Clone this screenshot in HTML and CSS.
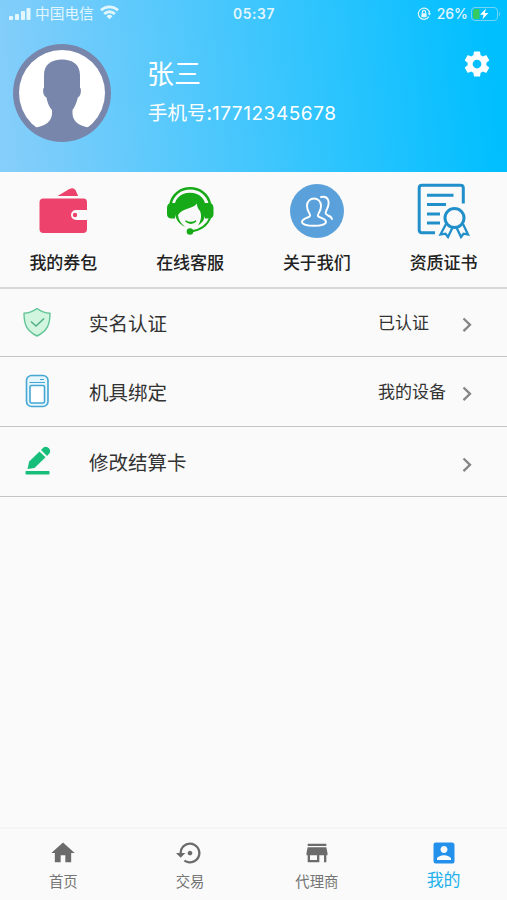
FILE: index.html
```html
<!DOCTYPE html>
<html lang="zh-CN">
<head>
<meta charset="utf-8">
<meta name="viewport" content="width=device-width, initial-scale=1">
<title>我的</title>
<link rel="stylesheet" href="styles.css">
</head>
<body>
<div class="screen">
  <header class="header">
    <div class="status">
      <div class="status-left">
        <svg class="signal" width="23" height="14" viewBox="0 0 23 14" fill="currentColor"><rect x="0" y="9" width="4" height="4" rx="1"/><rect x="6" y="7" width="4" height="6" rx="1"/><rect x="12" y="4" width="4" height="9" rx="1"/><rect x="17.500" y="1" width="4" height="12" rx="1"/></svg>
        <span class="carrier">中国电信</span>
        <svg class="wifi" width="19" height="15" viewBox="0 0 19 15" fill="none" stroke="currentColor" stroke-width="2.800"><path d="M1 5.300a12.200 12.200 0 0 1 17 0"/><path d="M4.200 8.900a7.600 7.600 0 0 1 10.600 0"/><path d="M9.500 14.300 6.500 11.300a4.300 4.300 0 0 1 6 0z" fill="currentColor" stroke="none"/></svg>
      </div>
      <span class="time">05:37</span>
      <div class="status-right">
        <svg width="14" height="14" viewBox="0 0 14 14" fill="none" stroke="currentColor" stroke-width="1.200"><path d="M11.800 9.600A5.600 5.600 0 1 1 12.600 6.500"/><path d="M10.700 6.200h3.300l-1.600 2.300z" fill="currentColor" stroke="none"/><rect x="4.400" y="6.200" width="5.200" height="4" rx=".5" fill="currentColor" stroke="none"/><path d="M5.400 6.200V5a1.600 1.600 0 0 1 3.200 0v1.200"/></svg>
        <span class="percent">26%</span>
        <svg width="30" height="14" viewBox="0 0 30 14"><rect x=".5" y=".5" width="26" height="13" rx="3.500" fill="none" stroke="#73d4f7"/><path d="M4 2h4.500v10H4a2 2 0 0 1-2-2V4a2 2 0 0 1 2-2z" fill="#35ca62"/><path d="M28 4.500q2 2.500 0 5z" fill="#73d4f7"/><path d="M15 1.500 9 7.800h3.600l-1.200 4.700 6-6.500h-3.600z" fill="#fff"/></svg>
      </div>
    </div>
    <div class="profile">
      <svg class="avatar" width="98" height="98" viewBox="0 0 98 98"><circle cx="49" cy="49" r="49" fill="#7986ac"/><circle cx="49" cy="49" r="43" fill="#fff"/><path d="M23 83.500c9-1.500 16-6 16-14V66c-3-3-5-9-5.500-12.500-2-.8-3.800-4-3.300-8.500l.8-1.500V31C31 20 39 15.500 49 15.500S67 20 67 31v12.500l.8 1.500c.5 4.500-1 7.700-3 8.500C64 57 62 63 59.500 66v3.500c0 8 7 12.500 16 14C68 92 60 94 49 94S30 92 23 83.500z" fill="#7986ac"/></svg>
      <div class="identity">
        <div class="name">张三</div>
        <div class="phone">手机号:<span class="digits">17712345678</span></div>
      </div>
      <svg class="gear" width="30" height="30" viewBox="0 0 24 24" fill="#fff"><path d="M19.430 12.980c.04-.32.07-.64.07-.98s-.03-.66-.07-.98l2.110-1.650c.19-.15.24-.42.12-.64l-2-3.460c-.12-.22-.39-.3-.61-.22l-2.490 1c-.52-.4-1.080-.73-1.690-.98l-.38-2.650A.488.488 0 0 0 14 2h-4c-.25 0-.46.18-.49.42l-.38 2.650c-.61.25-1.170.59-1.690.98l-2.490-1c-.23-.09-.49 0-.61.22l-2 3.460c-.13.22-.07.49.12.64l2.110 1.650c-.04.32-.07.65-.07.98s.03.66.07.98l-2.110 1.650c-.19.15-.24.42-.12.64l2 3.460c.12.22.39.3.61.22l2.490-1c.52.4 1.080.73 1.690.98l.38 2.650c.03.24.24.42.49.42h4c.25 0 .46-.18.49-.42l.38-2.650c.61-.25 1.170-.59 1.690-.98l2.490 1c.23.09.49 0 .61-.22l2-3.460c.12-.22.07-.49-.12-.64l-2.110-1.650zM12 15.500c-1.930 0-3.500-1.570-3.500-3.500s1.570-3.500 3.500-3.500 3.500 1.570 3.500 3.500-1.570 3.500-3.500 3.500z"/></svg>
    </div>
  </header>

  <nav class="shortcuts">
    <a class="shortcut">
      <svg width="56" height="56" viewBox="0 0 56 56"><path d="M22.500 13 34 6.300q4.500-2.500 6.500 1l2.700 5.700z" fill="#ec426b"/><path d="M8.500 15.500h40q3.500 0 3.500 4v7.500H41a5 5 0 0 0 0 10h11v9q0 4-4 4H8.500q-4 0-4-4V19.500q0-4 4-4z" fill="#ec426b"/><circle cx="40" cy="32" r="2.200" fill="#ec426b"/></svg>
      <span>我的券包</span>
    </a>
    <a class="shortcut">
      <svg width="56" height="56" viewBox="0 0 56 56"><g fill="#17aa18"><path d="M9 20h4v15.500H9Q5 35 5 31v-6q0-4.500 4-5zM43 20h4.500q4 .5 4 5v6q0 4-4 4.500H43z"/><path d="M12.500 28C11 17 18 9.800 28 9.800S45 17 43.700 28C43 36 41 39.500 36 42.500c3-4.500 4-10 2-14.500-2-2.500-3-4.500-3.200-7.500-3 5.500-13.800 4-18.800 11.500.5 5 3 8.500 7 12-6-3-10-8-10.500-16z"/><circle cx="28" cy="48.500" r="3.300"/></g><g fill="none" stroke="#17aa18"><path d="M8.500 21C13 0 43.500 0 48 21" stroke-width="2.600"/><path d="M48.500 34q-4.500 12.500-20 14.500" stroke-width="2"/><path d="M23.500 38q5 3 10.500 0-5 4.500-10.500 0z" stroke-width="1.400"/></g></svg>
      <span>在线客服</span>
    </a>
    <a class="shortcut">
      <svg width="56" height="56" viewBox="0 0 56 56"><circle cx="28" cy="28" r="27" fill="#5aa1db"/><g fill="none" stroke="#fff" stroke-width="1.900" stroke-linecap="round" stroke-linejoin="round"><path d="M21 33c1-2-3-4-3-10 0-10 14-10 14 0 0 6-4 8-3 10s8 2.500 8 6c0 5-24 5-24 0 0-3.500 7-4 8-6z"/><path d="M32 14c8-2 9 6 6 12-2 4-2 5 1 6.500 2 .8 3.500 1.500 4 3.500"/></g></svg>
      <span>关于我们</span>
    </a>
    <a class="shortcut">
      <svg width="56" height="56" viewBox="0 0 56 56" fill="none" stroke="#218fca" stroke-width="3"><path d="M19 49.800H6q-2.800 0-2.800-2.800V5q0-2.800 2.800-2.800h38.500q2.800 0 2.800 2.800v15.500"/><path d="M11 12.300h26.500M11 21.600h19M11 31h13M11 40h13"/><circle cx="38.500" cy="35" r="9.500"/><path d="M30 41l-5.500 10.500 5-.8 2.500 3.300 4.500-9.500M47 41l5 10.500-4.500-.8-2.500 3.300-4.500-9.500" stroke-width="2.300"/></svg>
      <span>资质证书</span>
    </a>
  </nav>

  <main class="list">
    <a class="row">
      <svg class="row-icon" width="30" height="34" viewBox="0 0 30 34"><path d="M15 3.500c4 3 8.500 4.500 13 4.800 0 11-2.500 17.500-13 22.700C4.500 25.800 2 19.300 2 8.300 6.500 8 11 6.500 15 3.500z" fill="#d2f5e0" stroke="#62c496" stroke-width="1.400" stroke-linejoin="round"/><path d="m9 16.500 5 4.500 8-7.500" fill="none" stroke="#4fae82" stroke-width="1.500"/></svg>
      <span class="label">实名认证</span><span class="value">已认证</span>
      <svg class="chevron" width="10" height="16" viewBox="0 0 10 16"><path d="m1.500 1.500 6.500 6.300-6.500 6.300"/></svg>
    </a>
    <a class="row">
      <svg class="row-icon" width="30" height="34" viewBox="0 0 30 34" fill="none" stroke="#45a7d3"><rect x="4.500" y="1.500" width="21.500" height="31" rx="5" fill="#e5f6fd" stroke-width="1.600"/><path d="M7.500 8.500h15.500M18 5.500h4" stroke-width="1"/><rect x="8" y="11.500" width="14.500" height="17.500" rx="1.500" fill="#fff" stroke-width="1.600"/></svg>
      <span class="label">机具绑定</span><span class="value">我的设备</span>
      <svg class="chevron" width="10" height="16" viewBox="0 0 10 16"><path d="m1.500 1.500 6.500 6.300-6.500 6.300"/></svg>
    </a>
    <a class="row row-card">
      <svg class="row-icon" width="30" height="34" viewBox="0 0 30 34" fill="#16be79"><rect x="3.500" y="27" width="24" height="3.500" rx=".8"/><path d="m5.500 25 1.700-7.500L17.500 7.500l6 5.700L12.500 24z"/><path d="m19 6 2.500-2.500c3-2.300 8.500 2 6 5.800L25 12z"/></svg>
      <span class="label">修改结算卡</span><span class="value"></span>
      <svg class="chevron" width="10" height="16" viewBox="0 0 10 16"><path d="m1.500 1.500 6.500 6.300-6.500 6.300"/></svg>
    </a>
  </main>

  <nav class="tabs">
    <a class="tab"><svg viewBox="0 0 24 24"><path d="M10 20v-6h4v6h5v-8h3L12 3 2 12h3v8z"/></svg><span>首页</span></a>
    <a class="tab"><svg viewBox="0 0 24 24"><path d="M14 12c0-1.100-.9-2-2-2s-2 .9-2 2 .9 2 2 2 2-.9 2-2zm-2-9a9 9 0 0 0-9 9H0l4 4 4-4H5c0-3.870 3.130-7 7-7s7 3.130 7 7-3.130 7-7 7c-1.510 0-2.910-.49-4.060-1.300l-1.420 1.440A9 9 0 1 0 12 3z"/></svg><span>交易</span></a>
    <a class="tab"><svg viewBox="0 0 24 24"><path d="M20 4H4v2h16V4zm1 10v-2l-1-5H4l-1 5v2h1v6h10v-6h4v6h2v-6h1zm-9 4H6v-4h6v4z"/></svg><span>代理商</span></a>
    <a class="tab active"><svg viewBox="0 0 24 24"><path d="M3 5v14a2 2 0 0 0 2 2h14c1.100 0 2-.9 2-2V5c0-1.100-.9-2-2-2H5a2 2 0 0 0-2 2zm12 4c0 1.660-1.340 3-3 3s-3-1.340-3-3 1.340-3 3-3 3 1.340 3 3zm-9 8c0-2 4-3.100 6-3.100s6 1.100 6 3.100v1H6v-1z"/></svg><span>我的</span></a>
  </nav>
</div>
</body>
</html>
```
FILE: styles.css
```css
* { box-sizing: border-box; }

body {
  margin: 0;
  background: #fafafa;
  color: #333;
  font-family: "Noto Sans CJK SC", sans-serif;
}

svg { display: block; flex: none; }

.screen {
  display: flex;
  flex-direction: column;
  height: 900px;
}

.header {
  height: 172px;
  background: linear-gradient(84deg, #87cefa, #00bfff 96%);
  color: #fff;
}

.status {
  display: grid;
  grid-template-columns: 1fr auto 1fr;
  align-items: center;
  height: 27px;
  padding: 0 6px 0 9px;
  color: #e2f6ff;
}

.status-left,
.status-right {
  display: flex;
  align-items: center;
}

.status-right { justify-content: flex-end; }

.wifi { margin-top: -2px; }

.carrier {
  margin: -1px 6px 0 3px;
  font-size: 14.700px;
  line-height: 20px;
}

.time {
  font: 600 13.800px/20px Inter, sans-serif;
  letter-spacing: .6px;
  margin-right: 2px;
}

.percent {
  margin: 0 3px 0 6px;
  font: 500 14px/20px Inter, sans-serif;
}

.profile {
  display: flex;
  padding: 17px 15px 0 13px;
}

.identity {
  flex: 1;
  padding: 9px 0 0 37px;
}

.name {
  font-size: 27px;
  line-height: 40px;
  margin-left: -1px;
}

.phone {
  margin-top: 4px;
  font-size: 19.500px;
  line-height: 30px;
}

.digits {
  font-family: Inter, sans-serif;
  font-size: 19px;
  letter-spacing: .55px;
}

.gear { margin-top: 5px; }

.shortcuts {
  display: grid;
  grid-template-columns: repeat(4, 1fr);
  height: 117px;
  border-bottom: 2px solid #d6d6d6;
}

.shortcut {
  display: flex;
  flex-direction: column;
  align-items: center;
  padding-top: 11px;
  color: #222;
  font-size: 17px;
  font-weight: 500;
  line-height: 24px;
}

.shortcut span { margin-top: 11px; }

.row {
  display: flex;
  align-items: center;
  height: 68px;
  padding: 0 35px 0 22px;
  border-bottom: 1px solid #c4c4c4;
}

.row + .row { height: 70px; }

.row-icon { margin-top: -1px; }

.label {
  flex: 1;
  margin-left: 37px;
  font-size: 19.500px;
  line-height: 30px;
}

.value {
  width: 69px;
  margin-right: 15px;
  font-size: 17px;
  line-height: 26px;
  margin-top: -1px;
  white-space: nowrap;
}

.chevron {
  margin-top: 4px;
  fill: none;
  stroke: #858585;
  stroke-width: 2.300;
}

.row-card .chevron { margin-top: 7px; }

.tabs {
  display: grid;
  grid-template-columns: repeat(4, 1fr);
  height: 73px;
  margin-top: auto;
  border-top: 2px solid #f4f4f4;
}

.tab {
  display: flex;
  flex-direction: column;
  align-items: center;
  padding-top: 10px;
  color: #757575;
  font-size: 14.400px;
  line-height: 22px;
}

.tab svg {
  width: 28px;
  height: 28px;
  margin-bottom: 3px;
  fill: #6b6b6b;
}

.active {
  color: #22b1ec;
  font-size: 17px;
}

.active svg {
  margin-bottom: 1px;
  fill: #2390ec;
}
```
